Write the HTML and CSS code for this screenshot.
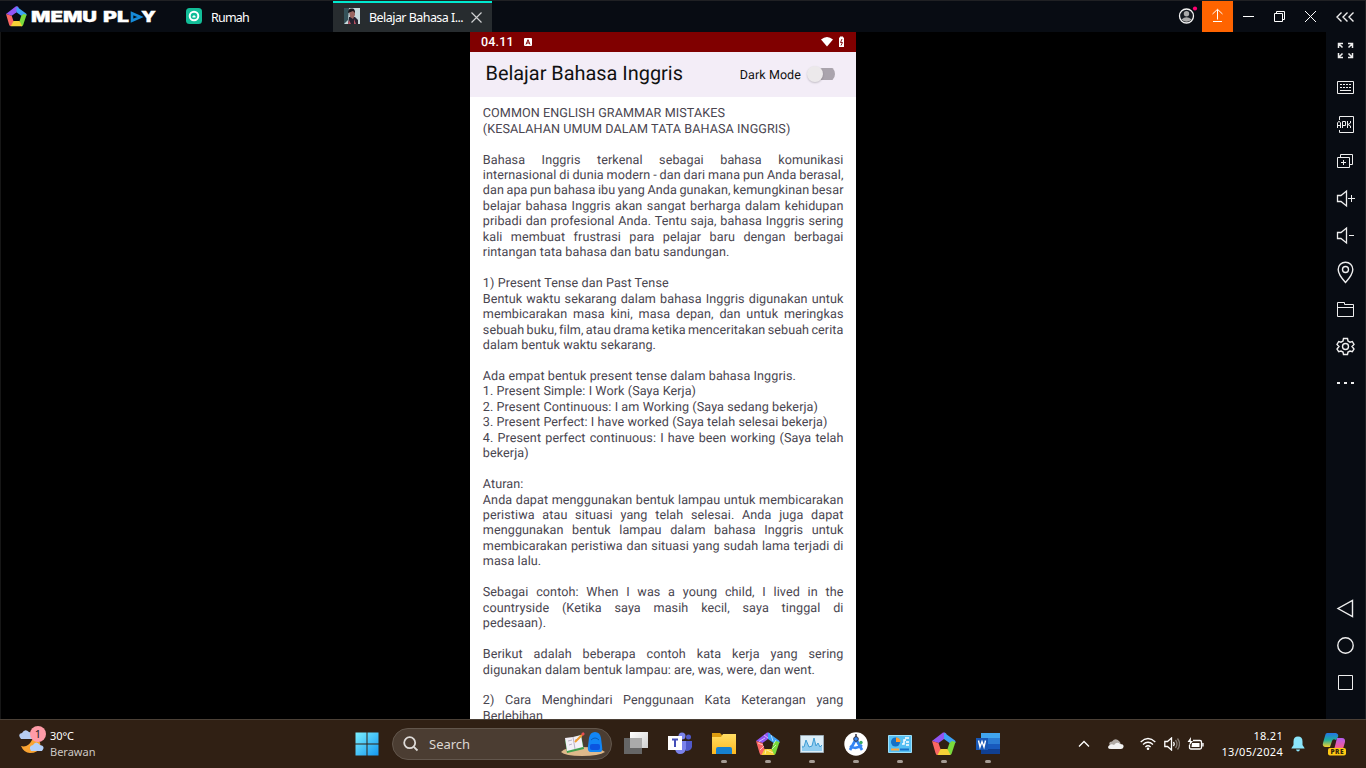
FILE: index.html
```html
<!DOCTYPE html>
<html lang="id">
<head>
<meta charset="utf-8">
<title>MEmu Play</title>
<link rel="stylesheet" href="styles.css">
</head>
<body>
<svg class="defs" aria-hidden="true">
  <defs>
    <linearGradient id="win" x1="0" y1="0" x2="1" y2="1"><stop offset="0" stop-color="#7bf0ff"/><stop offset="1" stop-color="#1497f0"/></linearGradient>
    <linearGradient id="fold" x1="0" y1="0" x2="0" y2="1"><stop offset="0" stop-color="#ffdd64"/><stop offset="1" stop-color="#fdb91f"/></linearGradient>
    <linearGradient id="front" x1="0" y1="0" x2="1" y2="1"><stop offset="0" stop-color="#fff"/><stop offset="1" stop-color="#cfcfcf"/></linearGradient>
    <linearGradient id="copA" x1="0" y1="0" x2="0" y2="1"><stop offset="0" stop-color="#2275e8"/><stop offset=".5" stop-color="#1fae9e"/><stop offset="1" stop-color="#f5d02c"/></linearGradient>
    <linearGradient id="copB" x1="0" y1="0" x2="0" y2="1"><stop offset="0" stop-color="#b35cf0"/><stop offset=".6" stop-color="#ee5b9c"/><stop offset="1" stop-color="#ff9a52"/></linearGradient>
    <symbol id="penta" viewBox="0 0 24 24">
      <path d="M0 9 11 .5Q14 0 14.500 2L12 7 6.500 11Z" fill="#9155f4"/>
      <path d="M12 .5 23 8.500Q24.500 11 22 11.500L17.500 11 12 7Z" fill="#3da2f7"/>
      <path d="M20 9 23.500 10 19.500 22Q18 24 16 22L15.500 17 17.500 11Z" fill="#7adb3c"/>
      <path d="M18.500 23H6Q3.500 23 5 20L8.500 17H15.500Z" fill="#f7d137"/>
      <path d="M0 9 6.500 11 8.500 17 5.500 23Q4 23 3.500 21Z" fill="#fa6663"/>
    </symbol>
  </defs>
</svg>

<header class="titlebar">
  <div class="brand">
    <svg class="brand-mark"><use href="#penta"/></svg>
    <svg class="brand-name" viewBox="0 0 126 20">
      <text x="0" y="15" textLength="66" lengthAdjust="spacingAndGlyphs">MEMU</text>
      <text x="72" y="15" textLength="26" lengthAdjust="spacingAndGlyphs">PL</text>
      <path d="M101 6.200V13.800L109.500 10Z" fill="none" stroke="#168bd8" stroke-width="2.600"/>
      <text x="110" y="15" textLength="15" lengthAdjust="spacingAndGlyphs">Y</text>
    </svg>
  </div>
  <div class="tab home">
    <svg class="home-icon" viewBox="0 0 16 16"><rect width="16" height="16" rx="3.500" fill="#12bd98"/><circle cx="8" cy="8" r="4.300" fill="none" stroke="#fff" stroke-width="2"/><path d="M6.500 8.500 8 7 9.500 8.500V9.500H6.500Z" fill="#fff"/></svg>
    <span class="home-text">Rumah</span>
  </div>
  <div class="tab active">
    <svg class="photo" viewBox="0 0 16 16"><rect width="16" height="16" fill="#c7dadd"/><path d="M0 0H5L4 12 0 16Z" fill="#35525a"/><path d="M4 16 5 9H11L14 12V16Z" fill="#26222f"/><path d="M5 3Q8 0 11 3V7L9 11 6 9Z" fill="#9a6660"/><path d="M4 5Q4 0 8 0.500 11 0 11 5L9 3Z" fill="#18151a"/><path d="M5 12 7 16H4ZM10 11 12 16H10Z" fill="#b75261"/></svg>
    <span class="tab-text">Belajar Bahasa I...</span>
    <svg class="close" viewBox="0 0 11 11"><path d="M.5.5 10.500 10.500M10.500.5.5 10.500"/></svg>
  </div>
  <div class="window-tools">
    <svg class="user" viewBox="0 0 20 20"><circle cx="8.500" cy="11" r="7" fill="#171b21" stroke="#f2f2f2" stroke-width="1.300"/><circle cx="8.500" cy="8.700" r="2.700" fill="#aaa"/><path d="M3.500 14.500Q8.500 10 13.500 14.500 8.500 19 3.500 14.500Z" fill="#aaa"/><circle cx="17" cy="3.500" r="2.100" fill="#ff0071"/></svg>
    <div class="upload"><svg viewBox="0 0 31 31"><path d="M15.500 18.500V8.500M10.500 13 15.500 8.300 20.500 13M11 20.500H20" /></svg></div>
    <div class="cell"><svg viewBox="0 0 31 31"><path d="M10 15.500H21"/></svg></div>
    <div class="cell"><svg viewBox="0 0 31 31"><path d="M10.500 12.500H18.500V20.500H10.500ZM12.500 12V10.500H20.500V18.500H19"/></svg></div>
    <div class="cell"><svg viewBox="0 0 31 31"><path d="M10 10 21 21M21 10 10 21"/></svg></div>
  </div>
  <div class="collapse"><svg viewBox="0 0 18 10"><path d="M5.500.5 1 5 5.500 9.500M11.500.5 7 5 11.500 9.500M17.500.5 13 5 17.500 9.500"/></svg></div>
</header>

<main class="emulator">
  <section class="phone">
    <div class="statusbar">
      <span class="clock">04.11</span>
      <svg class="badge-a" viewBox="0 0 8 8"><rect width="8" height="8" rx="1" fill="#fff"/><path d="M2 6.500 4 1.700 6 6.500M3 5H5" stroke="#800000" fill="none"/></svg>
      <svg class="status-icons" viewBox="0 0 25 12"><path d="M0 3.500Q6 -1.500 12 3.500L6 10.500Z" fill="#fff"/><path d="M18 1.500H19V.5H22V1.500H23V11H18Z" fill="#fff"/><path d="M21 3 19.500 6.500H21.500L20 9.500" stroke="#800000" fill="none" stroke-width=".9"/></svg>
    </div>
    <div class="appbar">
      <h1>Belajar Bahasa Inggris</h1>
      <span class="mode">Dark Mode</span>
      <span class="switch"><i></i></span>
    </div>
    <article class="lesson">
      <p>COMMON ENGLISH GRAMMAR MISTAKES</p>
      <p>(KESALAHAN UMUM DALAM TATA BAHASA INGGRIS)</p>
      <p class="gap"></p>
      <p class="full">Bahasa Inggris terkenal sebagai bahasa komunikasi</p>
      <p class="full tight">internasional di dunia modern - dan dari mana pun Anda berasal,</p>
      <p class="full tight">dan apa pun bahasa ibu yang Anda gunakan, kemungkinan besar</p>
      <p class="full">belajar bahasa Inggris akan sangat berharga dalam kehidupan</p>
      <p class="full">pribadi dan profesional Anda. Tentu saja, bahasa Inggris sering</p>
      <p class="full">kali membuat frustrasi para pelajar baru dengan berbagai</p>
      <p>rintangan tata bahasa dan batu sandungan.</p>
      <p class="gap"></p>
      <p>1) Present Tense dan Past Tense</p>
      <p class="full">Bentuk waktu sekarang dalam bahasa Inggris digunakan untuk</p>
      <p class="full">membicarakan masa kini, masa depan, dan untuk meringkas</p>
      <p class="full tight">sebuah buku, film, atau drama ketika menceritakan sebuah cerita</p>
      <p>dalam bentuk waktu sekarang.</p>
      <p class="gap"></p>
      <p>Ada empat bentuk present tense dalam bahasa Inggris.</p>
      <p>1. Present Simple: I Work (Saya Kerja)</p>
      <p>2. Present Continuous: I am Working (Saya sedang bekerja)</p>
      <p>3. Present Perfect: I have worked (Saya telah selesai bekerja)</p>
      <p class="full">4. Present perfect continuous: I have been working (Saya telah</p>
      <p>bekerja)</p>
      <p class="gap"></p>
      <p>Aturan:</p>
      <p class="full">Anda dapat menggunakan bentuk lampau untuk membicarakan</p>
      <p class="full">peristiwa atau situasi yang telah selesai. Anda juga dapat</p>
      <p class="full">menggunakan bentuk lampau dalam bahasa Inggris untuk</p>
      <p class="full">membicarakan peristiwa dan situasi yang sudah lama terjadi di</p>
      <p>masa lalu.</p>
      <p class="gap"></p>
      <p class="full">Sebagai contoh: When I was a young child, I lived in the</p>
      <p class="full">countryside (Ketika saya masih kecil, saya tinggal di</p>
      <p>pedesaan).</p>
      <p class="gap"></p>
      <p class="full">Berikut adalah beberapa contoh kata kerja yang sering</p>
      <p>digunakan dalam bentuk lampau: are, was, were, dan went.</p>
      <p class="gap"></p>
      <p class="full">2) Cara Menghindari Penggunaan Kata Keterangan yang</p>
      <p>Berlebihan</p>
    </article>
  </section>

  <aside class="sidebar">
    <div class="tools">
      <svg viewBox="0 0 19 19"><path class="bold" d="M2.500 7V2.500H7M3 3 6.500 6.500M12 2.500H16.500V7M16 3 12.500 6.500M2.500 12V16.500H7M3 16 6.500 12.500M16.500 12V16.500H12M16 16 12.500 12.500"/></svg>
      <svg viewBox="0 0 19 19"><path d="M1.500 3.500H17.500V15.500H1.500ZM4 12.500H15"/><path stroke-dasharray="2 1" d="M4 6.500H15M4 9.500H15"/></svg>
      <svg viewBox="0 0 19 19"><path d="M3.500 5V1.500H17.500V17.500H3.500V15M1.500 13V8L2.500 6.500H3.500L4.500 8V13M1.500 10.500H4.500M6.500 13V6.500H9.500V10.500H6.500M11.500 6V13M14.500 6V8L12 9.500 14.500 11V13"/></svg>
      <svg viewBox="0 1 19 19"><path d="M1.500 6.500H13.500V16.500H1.500ZM4.500 6V3.500H16.500V13.500H14M7.500 9V14M5 11.500H10"/></svg>
      <svg viewBox="0 0 19 19"><path class="speaker" d="M1.500 6.500H5L10.500 2V17L5 12.500H1.500Z"/><path d="M12 9.500H19M15.500 6V13"/></svg>
      <svg viewBox="0 0 19 19"><path class="speaker" d="M1.500 6.500H5L10.500 2V17L5 12.500H1.500Z"/><path d="M13 9.500H18"/></svg>
      <svg viewBox="0 0 19 21"><path class="mid" d="M9.500 20.500Q2.200 12.500 2.200 7.500A7.300 7.300 0 0 1 16.800 7.500Q16.800 12.500 9.500 20.500Z"/><circle class="mid" cx="9.500" cy="7.500" r="3"/></svg>
      <svg viewBox="0 0 19 19"><path d="M1.500 16.500V2.500H8.500V4.500H17.500V16.500ZM1.500 7.500H17.500"/></svg>
      <svg viewBox="0 0 19 19"><path class="mid" d="M7.500 1.500H11.500L12 4 14 5.200 16.300 4.500 18 7.500 16 9.500 18 12 16.300 14.700 14 14 12 15 11.500 17.500H7.500L7 15 5 14 2.700 14.700 1 12 3 9.500 1 7.500 2.700 4.500 5 5.200 7 4Z"/><circle class="mid" cx="9.500" cy="9.500" r="3"/></svg>
      <svg viewBox="0 0 19 19"><path stroke-width="2" stroke-dasharray="3 4" d="M1 9H18"/></svg>
    </div>
    <div class="tools nav">
      <svg viewBox="0 0 19 19"><path class="mid" d="M16.500 1.500V17.500L2 9.500Z"/></svg>
      <svg viewBox="0 0 19 19"><circle class="mid" cx="9.500" cy="9.500" r="7.700"/></svg>
      <svg viewBox="0 0 19 19"><path d="M2.500 2.500H16.500V16.500H2.500Z"/></svg>
    </div>
  </aside>
</main>

<footer class="taskbar">
  <div class="weather">
    <svg viewBox="0 0 30 30"><path d="M14 15Q24 13 22 22 20 28 12 28 6 28 3 21 10 23 14 15Z" fill="#f9a331"/><path d="M3 14Q-1 9 4 8 7 3 11 7 17 8 14 14Z" fill="#b6cdf2"/><path d="M13 26Q10 21 15 20 18 15 22 20 28 21 24 26Z" fill="#b4d0f8"/><circle cx="20" cy="9" r="8" fill="#ff9ba7"/><text x="20" y="13" text-anchor="middle">1</text></svg>
    <div><span class="temp">30°C</span><span class="cond">Berawan</span></div>
  </div>
  <div class="apps">
    <div class="app"><svg viewBox="0 0 24 24"><path fill="url(#win)" d="M.5.5H11.500V11.500H.5ZM12.500.5H23.500V11.500H12.500ZM.5 12.500H11.500V23.500H.5ZM12.500 12.500H23.500V23.500H12.500Z"/></svg></div>
    <div class="search">
      <svg class="lens" viewBox="0 0 16 16"><circle cx="6.700" cy="6.700" r="5.500"/><path d="M10.800 10.800 14.500 14.500"/></svg>
      <span>Search</span>
      <svg class="art" viewBox="0 0 46 26"><path d="M1 21Q5 16 22 16T45 21Q39 25 22 25 5 25 1 21Z" fill="#dfb98b"/><path d="M5 9 21 4 24 18 7 22Z" fill="#3fa04d"/><path d="M5 7 13 6 21 4 23 16 15 18 7 20Z" fill="#f3f0f7"/><path d="M13 6 15 18M8 10 12 9M15 9 19 8M9 14 12 13" stroke="#b9b1c6" fill="none"/><path d="M15 11 22 4" stroke="#ef9b2e" stroke-width="2"/><path d="M22 4 24 2" stroke="#e94e50" stroke-width="2.500"/><path d="M29 7Q30 1 35 1T41 7L42 15Q43 21 40 21H31Q27 21 28 15Z" fill="#1286f5"/><path d="M31 9Q35 5 39 9" stroke="#075cb8" fill="none"/><rect x="30" y="13" width="10" height="6" rx="2" fill="#0b55e0"/></svg>
    </div>
    <div class="app"><svg viewBox="0 0 24 24"><path d="M6 0H24V16H6Z" fill="url(#front)"/><path d="M0 6H18V22H0Z" fill="#666"/><path d="M6 6H18V16H6Z" fill="#aaa"/></svg></div>
    <div class="app"><svg viewBox="0 0 24 24"><circle cx="14" cy="4" r="3.500" fill="#7b83eb"/><circle cx="20.500" cy="5" r="2.500" fill="#5059c9"/><path d="M17 9H24V15Q23 19 18 19Z" fill="#5059c9"/><path d="M7 9H18V17Q17 22 12 22 8 22 7 17Z" fill="#7b83eb"/><path d="M0 4H14V18H0Z" fill="#fff"/><path d="M4 7.500H10M7 7V15" stroke="#444eb8" stroke-width="2"/></svg></div>
    <div class="app run"><svg viewBox="0 0 24 24"><path d="M0 1H8L11 4H22V9H0Z" fill="#dc9c10"/><path d="M0 5H9L11 2H24V22H0Z" fill="url(#fold)"/><path d="M4 22V17Q4 15 6 15H18Q20 15 20 17V22Z" fill="#1681cf"/></svg></div>
    <div class="app run"><svg viewBox="0 0 24 24"><use href="#penta"/><path d="M3 9.500 9 6M8 3 12 6M15 3 17 9M20 8 17 13M20 13 16 17M17 21 11 18M9 22 10 18M4 18 8 14M2 11 7 13" stroke="#fff" stroke-width=".6" fill="none"/></svg></div>
    <div class="app run"><svg viewBox="0 0 24 24"><path d="M.5 3.500H23.500V20.500H.5Z" fill="#dceef8" stroke="#9cabb5"/><path d="M2 19V13L4 16 6 8 9 15 12 14 14 6 16 14 18 11 20 15 22 13V19Z" fill="#91cdf0"/><path d="M2 15 4 15 6 8 9 15 12 14 14 6 16 14 18 11 20 15 22 13" fill="none" stroke="#3d9bd3"/></svg></div>
    <div class="app run"><svg viewBox="0 0 24 24"><circle cx="12" cy="12" r="11.700" fill="#fff"/><path d="M12 7 6 18M12 7 18 18M6 14Q12 18 18 13" fill="none" stroke="#3686f5" stroke-width="2.700"/><circle cx="12" cy="7" r="2.300" fill="#3686f5" stroke="#334" /><path d="M12 2V5" stroke="#334" stroke-width="1.500"/><circle cx="17" cy="10.500" r="1.700" fill="#38ab66"/></svg></div>
    <div class="app run"><svg viewBox="0 0 24 24"><path d="M.5 3.500H23.500V20.500H.5Z" fill="#56bff3" stroke="#9de0fa"/><circle cx="7.500" cy="10" r="4.500" fill="#1570c4"/><path d="M8 10V5.500A4.500 4.500 0 0 1 12.500 10Z" fill="#ff992e"/><path d="M14 12H16V8H18M17 6H21M18 10H21M18 13H21" stroke="#fff" stroke-width="1.500" fill="none"/><path d="M3 17.500H11" stroke="#ffa63c" stroke-width="2"/><path d="M12 17.500H21" stroke="#1673c9" stroke-width="2"/></svg></div>
    <div class="app run"><svg viewBox="0 0 24 24"><use href="#penta"/></svg></div>
    <div class="app run"><svg viewBox="0 0 24 24"><path d="M5 1H24V7H5Z" fill="#41a5ee"/><path d="M5 6H24V12H5Z" fill="#2b7cd3"/><path d="M5 12H24V17H5Z" fill="#185abd"/><path d="M5 17H24V22H5Z" fill="#103f91"/><path d="M0 6H12V18H0Z" fill="#1857b5"/><path d="M2.500 8.500 4 15 6 9.500 8 15 9.500 8.500" fill="none" stroke="#fff" stroke-width="1.400"/></svg></div>
  </div>
  <div class="tray">
    <svg class="chev" viewBox="0 0 12 8"><path d="M1 6.500 6 1.500 11 6.500"/></svg>
    <svg class="cloud" viewBox="0 0 16 12"><path d="M3 9Q-1 4 4 3.500 8-1 12 4L13 7Z" fill="#b0aaa5"/><path d="M3 11Q-1 11 .5 8 3 5 6 7 9 3 12 6 16 6 15.500 9 15 11 13 11Z" fill="#f2f2f2"/></svg>
    <svg class="wifi" viewBox="0 0 16 14"><path d="M.7 5Q8-2 15.300 5M3 7.500Q8 3 13 7.500M5.400 10Q8 7.500 10.600 10"/><circle cx="8" cy="11.700" r="1.300" fill="#fff" stroke="none"/></svg>
    <svg class="sound" viewBox="0 0 16 14"><path d="M.8 4.500H3.500L7.500 1V13L3.500 9.500H.8Z"/><path d="M9.500 5Q11 7 9.500 9"/><path opacity=".4" d="M11.500 3Q14.500 7 11.500 11M13.500 1.500Q17.500 7 13.500 12.500"/></svg>
    <svg class="battery" viewBox="0 0 17 14"><path d="M6 3.500H13Q14.500 3.500 14.500 5V10.500Q14.500 12 13 12H4Q2.500 12 2.500 10.500V8M16 6V9.500"/><path d="M5 6H12.500V10H4.500Z" fill="#fff" stroke="none"/><path d="M4 0 .5 5H3L2 9 6 4H3.800Z" fill="#fff" stroke="none"/></svg>
    <div class="datetime"><span>18.21</span><span>13/05/2024</span></div>
    <svg class="bell" viewBox="0 0 14 16"><path d="M.5 12 2.500 9V5.500Q2.500.5 7 .5T11.500 5.500V9L13.500 12V12.500H.5ZM5 13.500H9Q8.500 15.500 7 15.500T5 13.500Z" fill="#8be5fb"/></svg>
    <svg class="copilot" viewBox="0 0 24 24"><path d="M5 1H14Q17 2 16 5L14 8Q11 6 10 9L8 15H3Q0 14 1 11L3 4Q3.500 1 5 1Z" fill="url(#copA)"/><path d="M15 6H20Q23.500 6 23 10L21 17Q20 20 17 20H9Q12 19 13 14Z" fill="url(#copB)"/><rect x="6" y="16" width="18" height="7.500" rx="2" fill="#ffca14"/><text x="15" y="22" text-anchor="middle" textLength="13">PRE</text></svg>
  </div>
</footer>
</body>
</html>
```
FILE: styles.css
```css
* { box-sizing: border-box; }
body { margin: 0; width: 1366px; height: 768px; overflow: hidden; background: #000; display: flex; flex-direction: column; font-family: "Noto Sans", sans-serif; }
svg { display: block; flex: none; }
.defs { position: absolute; width: 0; height: 0; }

.titlebar { height: 32px; flex: none; display: flex; background: #080c13; border-top: 1px solid #202124; border-right: 1px solid #202124; color: #fff; }
.brand { width: 186px; display: flex; align-items: center; padding-left: 6px; gap: 4px; }
.brand-mark { width: 21px; height: 21px; }
.brand-name { width: 126px; height: 20px; overflow: visible; }
.brand-name text { font: 900 14.500px Inter, sans-serif; fill: #fff; stroke: #fff; stroke-width: .3; }
.tab { display: flex; align-items: center; }
.home { width: 147px; gap: 9px; }
.home-icon { width: 16px; height: 16px; margin-top: -1px; }
.home-text { font-size: 12.500px; letter-spacing: -.8px; padding-top: 2px; }
.active { width: 159px; padding-left: 11px; background: #272c2f; border-top: 2px solid #00ead0; }
.photo { width: 16px; height: 16px; margin-top: -3px; }
.tab-text { width: 102px; margin-left: 9px; font-size: 12.500px; letter-spacing: -.55px; white-space: nowrap; }
.close { width: 11px; height: 11px; stroke: #d0d1d2; stroke-width: 1.200; }
.window-tools { margin-left: auto; display: flex; }
.user { width: 20px; height: 20px; margin: 4px 4px 0 0; }
.window-tools div { width: 31px; height: 31px; }
.window-tools div svg { width: 31px; height: 31px; fill: none; stroke: #fff; }
.upload { background: #ff6400; }
.collapse { width: 39px; padding-right: 1px; display: grid; place-items: center; }
.collapse svg { width: 18px; height: 10px; fill: none; stroke: #eee; stroke-width: 1.400; }

.emulator { height: 687px; flex: none; display: flex; border-left: 1px solid #161616; }
.phone { width: 386px; margin-left: 469px; background: #fff; overflow: hidden; font-family: Roboto, sans-serif; text-rendering: geometricPrecision; }
.statusbar { height: 20px; background: #800000; color: #fff; display: flex; align-items: center; padding: 0 11px; }
.clock { width: 33px; font-size: 12.500px; font-weight: 500; letter-spacing: .2px; }
.badge-a { width: 8px; height: 8px; margin-left: 10px; }
.status-icons { width: 25px; height: 12px; margin-left: auto; margin-right: -1px; }
.appbar { height: 45px; background: #f3edf7; display: flex; align-items: center; padding: 0 21px 1px 15.500px; color: #111; }
h1 { margin: 0 auto 0 0; padding-bottom: 1px; font-size: 19.900px; font-weight: 400; letter-spacing: 0; }
.mode { padding-top: 2px; font-size: 12.500px; letter-spacing: .1px; }
.switch { width: 28px; height: 16px; margin-left: 6px; display: flex; align-items: center; background: linear-gradient(#aaa4ad, #aaa4ad) 4px 2px / 24px 12px no-repeat; border-radius: 0 8px 8px 0; }
.switch i { width: 16px; height: 16px; border-radius: 50%; background: #ece9eb; box-shadow: 0 1px 2px #0003; }
.lesson { padding: 9.200px 12.500px 0 12.800px; font-size: 12.600px; line-height: 15.460px; letter-spacing: .085px; color: #49454f; }
.lesson p { margin: 0; height: 15.460px; white-space: nowrap; }
.lesson .full { white-space: normal; text-align: justify; text-align-last: justify; }
.lesson .tight { word-spacing: -1.500px; }

.sidebar { margin-left: auto; width: 40px; background: #080c13; border-right: 1px solid #202124; display: flex; flex-direction: column; justify-content: space-between; padding: 0 0 18px; }
.tools { display: grid; grid-auto-rows: 37px; place-items: center; }
.tools svg { width: 19px; height: 19px; fill: none; stroke: #eee; stroke-width: 1; overflow: visible; }
.tools svg:nth-child(7) { height: 21px; }
.tools .mid { stroke-width: 1.400; }
.tools .speaker { stroke-width: 1.300; }
.tools .bold { stroke-width: 1.500; }

.taskbar { height: 49px; flex: none; background: #302014; border-top: 1px solid #4b4036; display: grid; grid-template-columns: 345px 665px 356px; color: #fff; }
.weather { display: flex; gap: 4px; padding: 5px 0 0 18px; }
.weather svg { width: 30px; height: 30px; }
.weather svg text { font-size: 11px; fill: #222; }
.weather div { display: flex; flex-direction: column; padding-top: 3px; margin-left: -2px; font-size: 11px; line-height: 16px; }
.temp { letter-spacing: -.1px; }
.cond { color: #cdc8c4; }
.apps { display: flex; align-items: center; }
.app { width: 44px; height: 48px; display: grid; place-items: center; position: relative; }
.app svg { width: 24px; height: 24px; }
.run::after { content: ""; position: absolute; left: 19px; bottom: 5px; width: 6px; height: 3px; border-radius: 2px; background: #a59c94; }
.search { width: 220px; height: 32px; margin: 0 2px 0 3px; padding: 0 5px 0 10px; display: flex; align-items: center; border: 1px solid #62564c; border-radius: 16px; background: #4b3d32; color: #ddd8d3; font-size: 13px; }
.lens { width: 16px; height: 16px; fill: none; stroke: #dedbd8; stroke-width: 1.800; }
.search span { margin-left: 10px; }
.art { width: 46px; height: 26px; margin-left: auto; }
.tray { display: flex; align-items: center; padding-left: 68px; }
.tray svg { fill: none; stroke: #fff; stroke-width: 1.300; }
.tray .chev { width: 12px; height: 8px; }
.tray .cloud { width: 16px; height: 12px; margin-left: 18px; stroke: none; }
.tray .wifi { width: 16px; height: 14px; margin-left: 16px; }
.tray .sound { width: 16px; height: 14px; margin-left: 8px; }
.tray .battery { width: 17px; height: 14px; margin-left: 7px; }
.datetime { width: 79px; display: flex; flex-direction: column; align-items: flex-end; font-size: 11px; line-height: 16px; letter-spacing: .3px; }
.tray .bell { width: 14px; height: 16px; margin-left: 8px; stroke: none; }
.tray .copilot { width: 24px; height: 24px; margin-left: 17px; stroke: none; }
.copilot text { font: 800 6.500px "Open Sans", sans-serif; fill: #33270b; }
```
